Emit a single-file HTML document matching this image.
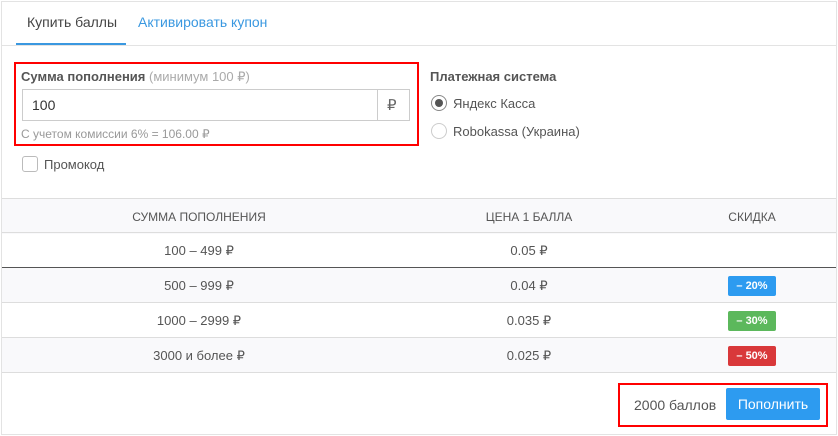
<!DOCTYPE html>
<html><head><meta charset="utf-8"><style>
*{box-sizing:border-box;margin:0;padding:0}
body{width:838px;height:436px;background:#fff;font-family:"Liberation Sans",sans-serif;color:#555;position:relative;overflow:hidden;font-size:13px}
.a{position:absolute}
.panel{left:1px;top:1px;width:836px;height:434px;border:1px solid #e3e3e3}
.tr{left:2px;width:834px;height:35px;display:flex;align-items:center;font-size:12px;color:#555}
.tr div{position:absolute;transform:translateX(-50%);white-space:nowrap}
.badge{width:48px;height:20px;border-radius:2px;color:#fff;font-weight:bold;font-size:11px;display:flex;align-items:center;justify-content:center}
</style></head><body>
<div class="a panel"></div>
<div class="a" style="left:2px;top:45px;width:834px;height:1px;background:#e3e3e3"></div>
<div class="a" style="left:27px;top:14px;font-size:14px;color:#444">Купить баллы</div>
<div class="a" style="left:16px;top:43px;width:110px;height:2px;background:#3a98e0"></div>
<div class="a" style="left:138px;top:14px;font-size:14px;color:#3a98e0">Активировать купон</div>

<div class="a" style="left:14px;top:62px;width:405px;height:84px;border:2px solid #f00"></div>
<div class="a" style="left:21px;top:69px;font-size:13px;font-weight:bold;color:#555">Сумма пополнения <span style="font-weight:normal;color:#aaa">(минимум 100 ₽)</span></div>
<div class="a" style="left:22px;top:89px;width:388px;height:32px;border:1px solid #ccc"></div>
<div class="a" style="left:377px;top:89px;width:1px;height:32px;background:#ccc"></div>
<div class="a" style="left:32px;top:97px;font-size:14px;color:#333">100</div>
<div class="a" style="left:387px;top:96px;font-size:15px;color:#666">₽</div>
<div class="a" style="left:21px;top:127px;font-size:12px;color:#999">С учетом комиссии 6% = 106.00 ₽</div>

<div class="a" style="left:22px;top:156px;width:16px;height:16px;border:1px solid #bbb;border-radius:3px"></div>
<div class="a" style="left:44px;top:157px;font-size:13px;color:#555">Промокод</div>

<div class="a" style="left:430px;top:69px;font-size:13px;font-weight:bold;color:#555">Платежная система</div>
<div class="a" style="left:431px;top:95px;width:16px;height:16px;border:1px solid #888;border-radius:50%;background:#fff"><div style="margin:3px;width:8px;height:8px;border-radius:50%;background:#555"></div></div>
<div class="a" style="left:453px;top:96px;font-size:13px">Яндекс Касса</div>
<div class="a" style="left:431px;top:123px;width:16px;height:16px;border:1px solid #ccc;border-radius:50%"></div>
<div class="a" style="left:453px;top:124px;font-size:13px">Robokassa (Украина)</div>

<div class="a" style="left:2px;top:198px;width:834px;height:1px;background:#ddd"></div>
<div class="a tr" style="top:199px;background:#f9f9fb"><div style="left:197px">СУММА ПОПОЛНЕНИЯ</div><div style="left:527px">ЦЕНА 1 БАЛЛА</div><div style="left:750px">СКИДКА</div></div>
<div class="a" style="left:2px;top:232px;width:834px;height:1px;background:#ddd"></div>
<div class="a tr" style="top:233px;font-size:13px"><div style="left:197px">100 – 499 ₽</div><div style="left:527px">0.05 ₽</div></div>
<div class="a" style="left:2px;top:267px;width:834px;height:1px;background:#555"></div>
<div class="a tr" style="top:268px;font-size:13px;background:#f9f9fb"><div style="left:197px">500 – 999 ₽</div><div style="left:527px">0.04 ₽</div><div style="left:750px"><span class="badge" style="background:#2d9bf0">– 20%</span></div></div>
<div class="a" style="left:2px;top:302px;width:834px;height:1px;background:#ddd"></div>
<div class="a tr" style="top:303px;font-size:13px"><div style="left:197px">1000 – 2999 ₽</div><div style="left:527px">0.035 ₽</div><div style="left:750px"><span class="badge" style="background:#5cb85c">– 30%</span></div></div>
<div class="a" style="left:2px;top:337px;width:834px;height:1px;background:#ddd"></div>
<div class="a tr" style="top:338px;font-size:13px;background:#f9f9fb"><div style="left:197px">3000 и более ₽</div><div style="left:527px">0.025 ₽</div><div style="left:750px"><span class="badge" style="background:#d9383a">– 50%</span></div></div>
<div class="a" style="left:2px;top:372px;width:834px;height:1px;background:#ddd"></div>

<div class="a" style="left:618px;top:383px;width:210px;height:44px;border:2px solid #f00"></div>
<div class="a" style="left:634px;top:397px;font-size:14px;color:#555">2000 баллов</div>
<div class="a" style="left:726px;top:388px;width:94px;height:32px;background:#2d9bf0;border-radius:2px;color:#fff;font-size:14px;display:flex;align-items:center;justify-content:center">Пополнить</div>
</body></html>
